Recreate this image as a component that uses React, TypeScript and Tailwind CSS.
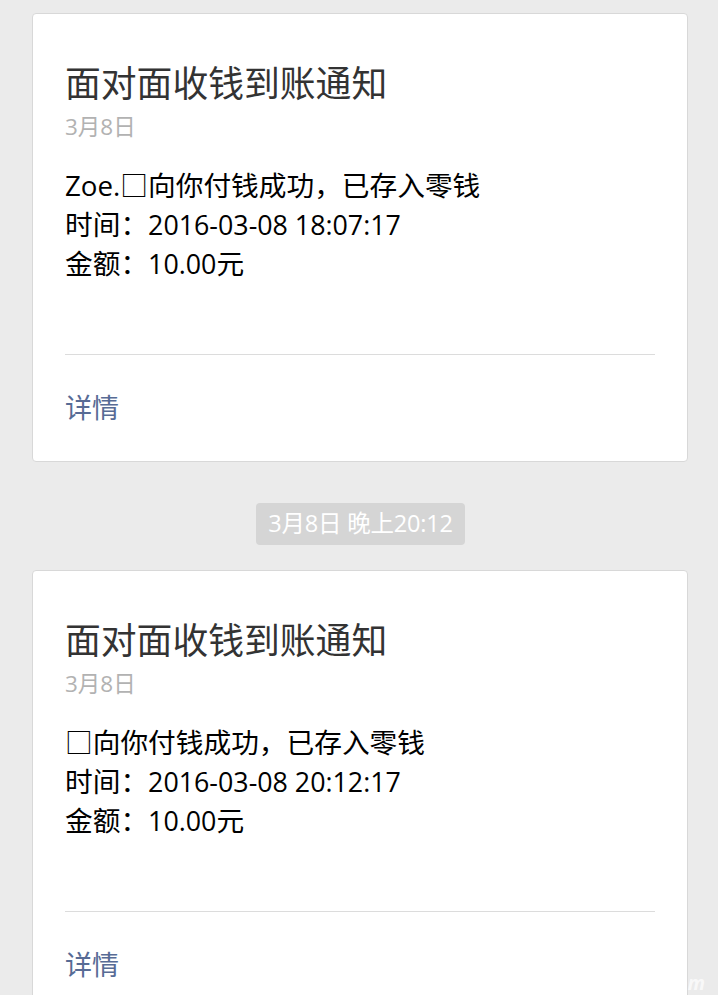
const font = { fontFamily: '"Open Sans", "Noto Sans CJK SC", sans-serif' };

interface Notice {
  payer: string;
  time: string;
}

const notices: Notice[] = [
  { payer: 'Zoe.□', time: '2016-03-08 18:07:17' },
  { payer: '□', time: '2016-03-08 20:12:17' },
];

function NoticeCard({ notice }: { notice: Notice }) {
  return (
    <div className="ml-[32px] w-[656px] bg-white border border-[#d8d8d8] rounded-[4px] px-[32px] pt-[47px] pb-[33px]">
      <div className="text-[35.8px] leading-[44px] text-[#333333]">面对面收钱到账通知</div>
      <div className="mt-[7px] text-[22.5px] leading-[30px] text-[#b2b2b2]">3月8日</div>
      <div className="mt-[24px] text-[27.7px] leading-[39px] text-black">
        <div>{notice.payer}向你付钱成功，已存入零钱</div>
        <div>
          时间：<span className="text-[26.8px]">{notice.time}</span>
        </div>
        <div>
          金额：<span className="text-[26.8px]">10.00</span>元
        </div>
      </div>
      <div className="mt-[71px] h-px bg-[#dcdcdc]"></div>
      <div className="mt-[33px] text-[27px] leading-[40px] text-[#576b95]">详情</div>
    </div>
  );
}

export default function App() {
  return (
    <div className="relative w-[718px] h-[995px] overflow-hidden bg-[#ebebeb] pt-[13px]" style={font}>
      <NoticeCard notice={notices[0]} />

      {/* time divider */}
      <div className="flex justify-center mt-[41px] mb-[25px]">
        <div className="ml-[3px] h-[42px] px-[12px] flex items-center rounded-[4px] bg-[#d5d5d5] text-white text-[23.5px] tracking-[-0.2px]">
          3月8日 晚上20:12
        </div>
      </div>

      <NoticeCard notice={notices[1]} />

      {/* watermark */}
      <div className="absolute left-[548px] top-[940px] flex flex-col items-end gap-[2px] italic font-bold text-white/70 pointer-events-none">
        <div className="text-[27px] leading-[30px] tracking-[6px] pr-[36px]">游戏网</div>
        <div className="text-[19px] leading-[22px]">www.0827ug.com</div>
      </div>
    </div>
  );
}
